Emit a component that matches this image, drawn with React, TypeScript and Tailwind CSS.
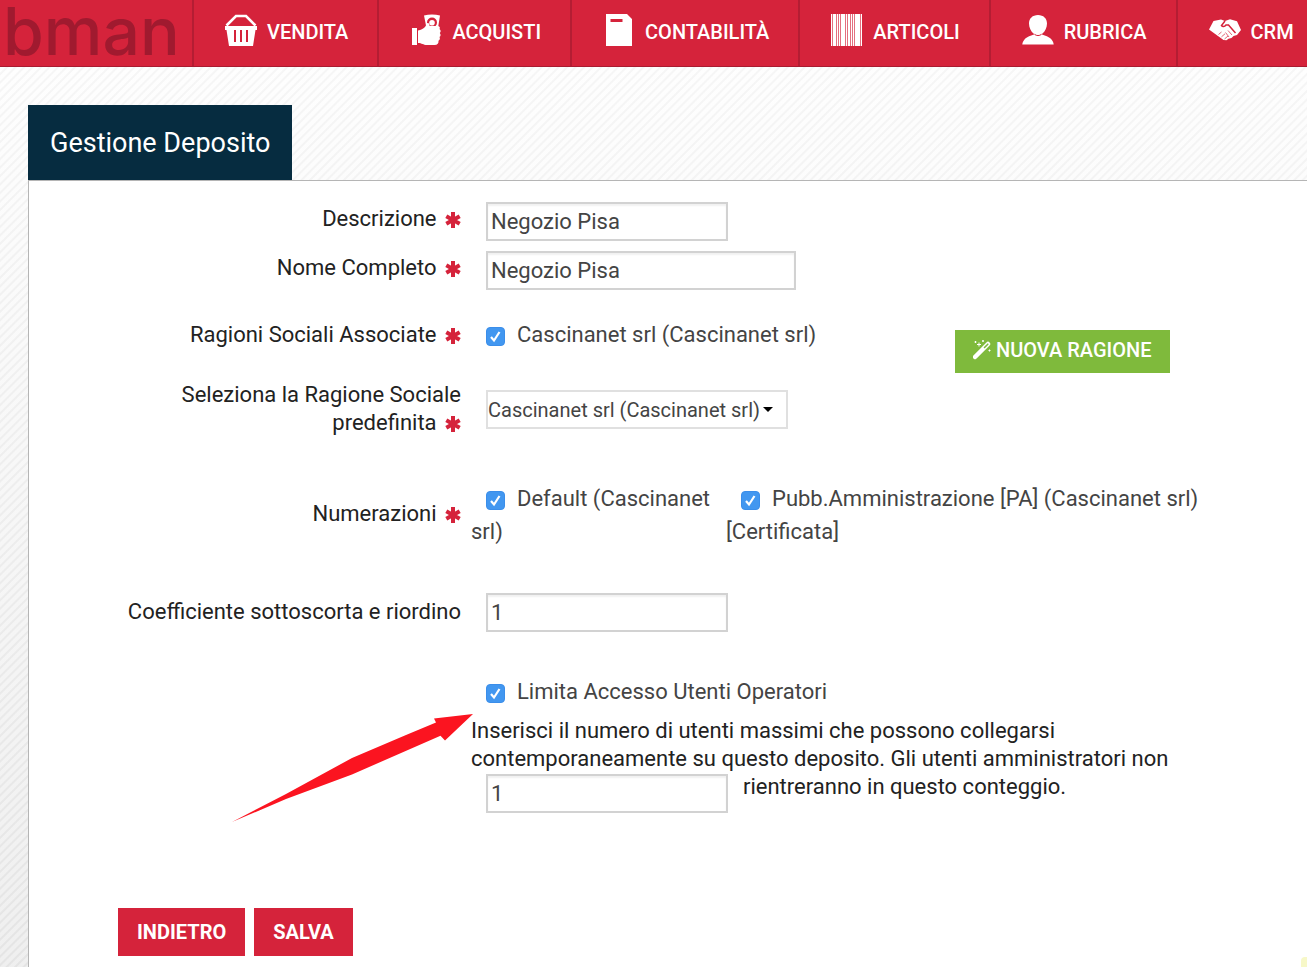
import { useState } from 'react';
import type { ComponentType, ReactNode } from 'react';

interface NavItemDef {
  label: string;
  icon: ComponentType;
}

function BasketIcon() {
  return (
    <svg viewBox="0 0 32 32" className="size-8 shrink-0" aria-hidden="true">
      <path d="M1.500 11.500 11 2h10l9.500 9.500" fill="none" stroke="white" strokeWidth="2.6" />
      <path
        fill="white"
        fillRule="evenodd"
        d="M0 12h32v4h-1.500l-2.500 16H4L1.500 16H0zM9 16v12h2V16zM15 16v12h2V16zM21 16v12h2V16z"
      />
    </svg>
  );
}

function HandMoneyIcon() {
  return (
    <svg viewBox="0 0 32 32" className="size-8 shrink-0" aria-hidden="true">
      <path fill="white" d="M2 14h5v17H2z" />
      <path
        fill="white"
        d="M8 16.500c3-.5 5-1.500 7-3.500l2-3.500c1-1 2.500 0 2.500 1.500v1h8c2 0 3 1.500 2 3 1.500 1 1.500 3 .3 4 1.200 1.500 1 3.200-.3 4 .8 1.500.3 3-1 3.700.3 2.500-1 4.300-4 4.300H17c-4 0-5-2-9-2z"
      />
      <path
        fill="white"
        fillRule="evenodd"
        d="M14 1.500C19 0 25 0 30 1.500L28 14H16.500zM22 3.500a5 5 0 1 0 0 10 5 5 0 0 0 0-10z"
      />
      <circle cx="22" cy="8.800" r="2.800" fill="white" />
    </svg>
  );
}

function LedgerIcon() {
  return (
    <svg viewBox="0 0 32 32" className="size-8 shrink-0" aria-hidden="true">
      <path fill="white" fillRule="evenodd" d="M3 0h21l5 5v27H3zM7.500 5v3h12V5z" />
    </svg>
  );
}

// [x, width] of every bar
const bars = [
  [0, 1],
  [2, 3],
  [6, 1],
  [8, 1],
  [10, 4],
  [15, 1],
  [17, 2],
  [20, 1],
  [22, 1],
  [24, 5],
  [30, 1],
];

function BarcodeIcon() {
  return (
    <svg viewBox="0 0 32 32" className="size-8 shrink-0" aria-hidden="true">
      <path fill="white" fillOpacity="0.35" d="M0 0h31v32H0z" />
      {bars.map(([x, width]) => (
        <rect key={x} x={x} y="0" width={width} height="32" fill="white" />
      ))}
    </svg>
  );
}

function PersonIcon() {
  return (
    <svg viewBox="0 0 32 32" className="size-8 shrink-0" aria-hidden="true">
      <path
        fill="white"
        d="M16 1c5.500 0 9 3.500 9 8.500 0 4.200-2 8-4.500 10l-1 .8c3 1.200 8 2.700 10 5.200 1.300 1.500 1.900 3 2.200 5H.3c.3-2 .9-3.500 2.200-5 2-2.500 7-4 10-5.200l-1-.8C9 17.500 7 13.700 7 9.500 7 4.500 10.500 1 16 1z"
      />
      <path d="M12.500 20.300c2 1.700 5 1.700 7 0" fill="none" stroke="#d5233b" strokeWidth="1" />
    </svg>
  );
}

function HandshakeIcon() {
  return (
    <svg viewBox="0 0 32 32" className="size-8 shrink-0" aria-hidden="true">
      <path
        fill="white"
        d="M0 15.500 4.500 7 12 5.500l4 1.500 5-1.800 7 2 4 8.800-4 5-3.500 1-2 2-3 .8-2 1.500-3-.3-9-6.500z"
      />
      <path
        d="m16 7-3.500 4.500c1 1.500 3 1.500 4.500-.5h2.500l7 8"
        fill="none"
        stroke="#d5233b"
        strokeWidth="1.500"
      />
      <path
        d="m9.500 20.500 3-2.500M12.500 22.800l3.500-3M15.500 25l3.500-3M19 16.500l4 4.500M16.500 18.500l3.500 4.500"
        fill="none"
        stroke="#d5233b"
        strokeWidth="0.700"
      />
    </svg>
  );
}

function WandIcon() {
  return (
    <svg viewBox="0 0 18 20" className="h-5 w-[18px] shrink-0" aria-hidden="true">
      <path d="M2 17 15 4" stroke="white" strokeWidth="4.500" strokeLinecap="round" />
      <path d="m11.500 7.500 3.300-3.300" stroke="#7fba3c" strokeWidth="1.600" strokeLinecap="round" />
      <path
        d="M6 2.500v4M4 4.500h4M2.500 1v2M1.500 2h2M10 0v2M9 1h2M16.500 9.500v2M15.500 10.500h2"
        stroke="white"
        strokeWidth="1"
      />
    </svg>
  );
}

const navItems: NavItemDef[] = [
  { label: 'VENDITA', icon: BasketIcon },
  { label: 'ACQUISTI', icon: HandMoneyIcon },
  { label: 'CONTABILITÀ', icon: LedgerIcon },
  { label: 'ARTICOLI', icon: BarcodeIcon },
  { label: 'RUBRICA', icon: PersonIcon },
  { label: 'CRM', icon: HandshakeIcon },
];

const inputClass =
  'ml-[15px] h-[39px] border-2 border-[#d2d2d2] bg-white px-[3px] text-[#444] shadow-[inset_0_2px_2px_rgba(0,0,0,0.06)] outline-none';

function Required() {
  return (
    <svg viewBox="0 0 16 16" className="ml-[3px] inline size-4" role="img" aria-label="obbligatorio">
      <path d="M8 0v16M1.300 4.200l13.400 7.600M1.300 11.800l13.400-7.600" stroke="#d5233b" strokeWidth="4" />
    </svg>
  );
}

function Check({ children }: { children: ReactNode }) {
  const [checked, setChecked] = useState(true);

  return (
    <label className="leading-[33px] text-[#444]">
      <span className="relative mr-3 ml-[15px] inline-block size-[19px] align-[-4px]">
        <input
          type="checkbox"
          checked={checked}
          onChange={() => setChecked(!checked)}
          className="block size-[19px] appearance-none rounded-[4px] border border-gray-400 bg-white checked:border-[#3b8eea] checked:bg-[#4297f0]"
        />
        {checked && (
          <svg viewBox="0 0 19 19" className="pointer-events-none absolute inset-0" aria-hidden="true">
            <path d="m5 10 3 3.500L13.500 5" fill="none" stroke="white" strokeWidth="2.200" />
          </svg>
        )}
      </span>
      {children}
    </label>
  );
}

export default function App() {
  const [descrizione, setDescrizione] = useState('Negozio Pisa');
  const [nome, setNome] = useState('Negozio Pisa');
  const [coefficiente, setCoefficiente] = useState('1');
  const [utenti, setUtenti] = useState('1');

  return (
    <div className="relative flex min-h-screen flex-col overflow-hidden bg-[linear-gradient(to_bottom,rgba(255,255,255,0.6),rgba(220,220,220,0.45)),repeating-linear-gradient(135deg,#ffffff_0px,#ffffff_3px,#ebebeb_4px,#ebebeb_5px,#ffffff_6px)] font-['Roboto',sans-serif] text-[22px] leading-7 text-[#222]">
      {/* Top bar */}
      <header className="flex h-[67px] shrink-0 border-b border-[#a91c31] bg-[#d5233b]">
        <a
          href="#"
          className="flex w-48 shrink-0 items-center pb-1 pl-[3px] font-['Inter',sans-serif] text-[66px] leading-none font-medium text-[#a01a2f]"
        >
          bman
        </a>
        <nav className="flex">
          {navItems.map(({ label, icon: Icon }) => (
            <a
              key={label}
              href="#"
              className="flex shrink-0 items-center gap-[10px] border-l-2 border-[#b41d33] pr-[29px] pb-[6px] pl-[31px] text-xl font-medium text-white"
            >
              <Icon />
              <span className="pt-[3px]">{label}</span>
            </a>
          ))}
        </nav>
      </header>

      <main className="flex grow flex-col pt-[38px] pl-7">
        <h1 className="flex h-[75px] items-center self-start bg-[#062c40] px-[22px] text-[27px] text-white">
          Gestione Deposito
        </h1>

        <form
          onSubmit={(e) => e.preventDefault()}
          className="grow border-t border-l border-[#b5b5b5] bg-white pt-[21px] pb-[10px]"
        >
          <div className="grid grid-cols-[442px_1fr] items-start">
            <label htmlFor="descrizione" className="pt-[3px] pr-[10px] text-right">
              Descrizione <Required />
            </label>
            <div>
              <input
                id="descrizione"
                value={descrizione}
                onChange={(e) => setDescrizione(e.target.value)}
                className={`${inputClass} w-[242px]`}
              />
            </div>
          </div>

          <div className="mt-[10px] grid grid-cols-[442px_1fr] items-start">
            <label htmlFor="nome" className="pt-[3px] pr-[10px] text-right">
              Nome Completo <Required />
            </label>
            <div>
              <input
                id="nome"
                value={nome}
                onChange={(e) => setNome(e.target.value)}
                className={`${inputClass} w-[310px]`}
              />
            </div>
          </div>

          <div className="mt-7 grid grid-cols-[442px_484px_auto] items-start justify-start">
            <span className="pt-[3px] pr-[10px] text-right">
              Ragioni Sociali Associate <Required />
            </span>
            <Check>Cascinanet srl (Cascinanet srl)</Check>
            <button
              type="button"
              className="mt-3 flex h-[43px] items-center gap-[5px] bg-[#7fba3c] px-[18px] pb-1 text-xl font-medium text-white"
            >
              <WandIcon />
              NUOVA RAGIONE
            </button>
          </div>

          <div className="mt-2 grid grid-cols-[442px_1fr] items-start">
            <label htmlFor="ragione" className="pr-[10px] pl-36 text-right">
              Seleziona la Ragione Sociale predefinita <Required />
            </label>
            <div className="relative mt-[9px] ml-[15px] w-[302px]">
              <select
                id="ragione"
                className="block h-[39px] w-full appearance-none border-2 border-[#e0e0e0] bg-white text-xl text-[#444] outline-none"
              >
                <option>Cascinanet srl (Cascinanet srl)</option>
              </select>
              <svg
                viewBox="0 0 10 5"
                className="pointer-events-none absolute top-[17px] right-[15px] h-[5px] w-[10px]"
                aria-hidden="true"
              >
                <path d="M0 0h10L5 5z" />
              </svg>
            </div>
          </div>

          <div className="mt-[45px] grid grid-cols-[442px_255px_1fr] items-start">
            <span className="pt-[18px] pr-[10px] text-right">
              Numerazioni <Required />
            </span>
            <div className="pr-4">
              <Check>Default (Cascinanet srl)</Check>
            </div>
            <div className="max-w-[480px]">
              <Check>Pubb.Amministrazione [PA] (Cascinanet srl) [Certificata]</Check>
            </div>
          </div>

          <div className="mt-[45px] grid grid-cols-[442px_1fr] items-start">
            <label htmlFor="coefficiente" className="pt-[5px] pr-[10px] text-right">
              Coefficiente sottoscorta e riordino
            </label>
            <div>
              <input
                id="coefficiente"
                value={coefficiente}
                onChange={(e) => setCoefficiente(e.target.value)}
                className={`${inputClass} w-[242px]`}
              />
            </div>
          </div>

          <div className="mt-[43px] grid grid-cols-[442px_1fr] items-start">
            <div />
            <div className="relative">
              <Check>Limita Accesso Utenti Operatori</Check>
              <label htmlFor="utenti" className="mt-[9px] block max-w-[700px]">
                Inserisci il numero di utenti massimi che possono collegarsi contemporaneamente su questo
                deposito. Gli utenti amministratori non
              </label>
              <div className="flex items-start gap-[15px]">
                <input
                  id="utenti"
                  value={utenti}
                  onChange={(e) => setUtenti(e.target.value)}
                  className={`${inputClass} mt-px w-[242px]`}
                />
                <span>rientreranno in questo conteggio.</span>
              </div>

              {/* Pointer to the access limit */}
              <svg
                viewBox="0 0 242 109"
                className="pointer-events-none absolute top-[38px] -left-[239px] h-[109px] w-[242px]"
                aria-hidden="true"
              >
                <path
                  d="M0 109 54 81 120 45 174 22 204 9.500 202 5.500 241 1 213 27.500 208.500 22.700 120 61.500 54 86z"
                  fill="#fb1420"
                />
              </svg>
            </div>
          </div>

          <div className="mt-[95px] flex gap-[9px] pl-[89px]">
            <button
              type="button"
              className="h-12 bg-[#d5233b] px-[19px] text-xl font-bold text-white"
            >
              INDIETRO
            </button>
            <button
              type="submit"
              className="h-12 bg-[#d5233b] px-[19px] text-xl font-bold text-white"
            >
              SALVA
            </button>
          </div>
        </form>
      </main>

      <div className="absolute right-0 bottom-0 h-[10px] w-[6px] rounded-tl bg-[#f7f8c8]" />
    </div>
  );
}
